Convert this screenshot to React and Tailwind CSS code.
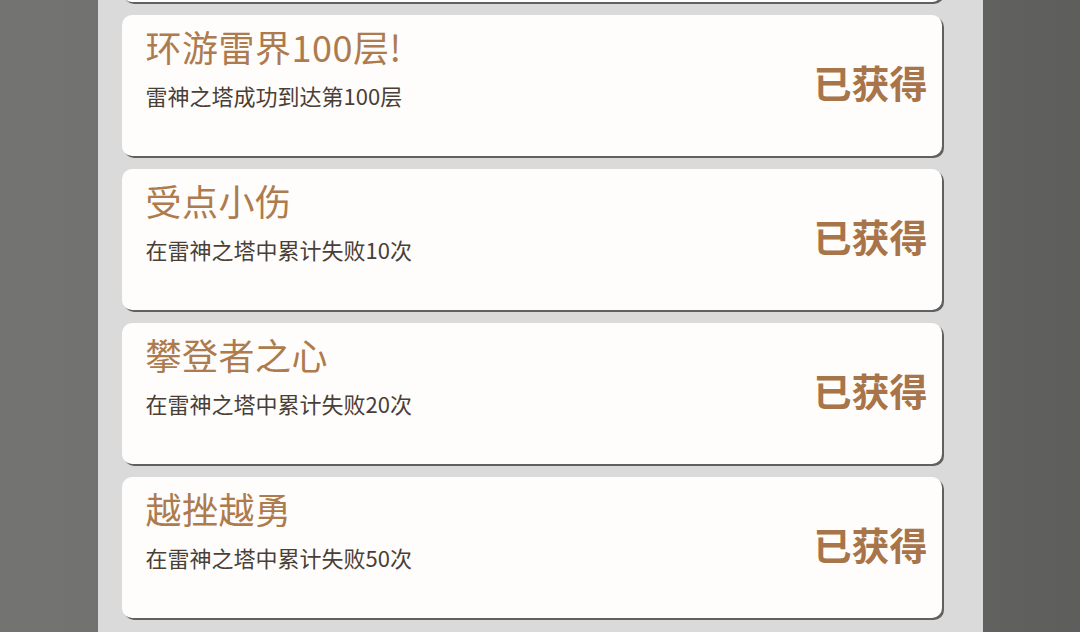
const achievements = [
  { title: "登顶之路", desc: "雷神之塔成功到达第50层" },
  { title: "环游雷界100层!", desc: "雷神之塔成功到达第100层" },
  { title: "受点小伤", desc: "在雷神之塔中累计失败10次" },
  { title: "攀登者之心", desc: "在雷神之塔中累计失败20次" },
  { title: "越挫越勇", desc: "在雷神之塔中累计失败50次" },
];

const font = { fontFamily: '"Noto Sans CJK SC", "Noto Sans", sans-serif' };

function Card({ title, desc }) {
  return (
    <div className="flex h-[141px] w-[820px] shrink-0 items-center justify-between rounded-[10px] bg-[#fefdfb] pl-[24px] pr-[14px] shadow-[2px_2px_0.5px_#606060]">
      <div className="flex h-full flex-col pt-[8px]">
        <div className="text-[36px] leading-[46px] tracking-[0.5px] text-[#ad7b4e]">{title}</div>
        <div className="mt-[11px] text-[22px] leading-[30px] text-[#4a3f37]">{desc}</div>
      </div>
      <div className="mb-[8px] text-[38px] font-semibold leading-[44px] text-[#a87449]">已获得</div>
    </div>
  );
}

export default function App() {
  return (
    <div
      style={font}
      className="flex h-[632px] w-[1080px] items-start justify-center overflow-hidden bg-[linear-gradient(90deg,#737371,#6c6c6a_50%,#5e5e5c)]"
    >
      <div className="mt-[-139px] flex h-[800px] w-[885px] shrink-0 flex-col gap-[13px] bg-[#dadada] pl-[24px]">
        {achievements.map((a) => (
          <Card key={a.title} {...a} />
        ))}
      </div>
    </div>
  );
}
